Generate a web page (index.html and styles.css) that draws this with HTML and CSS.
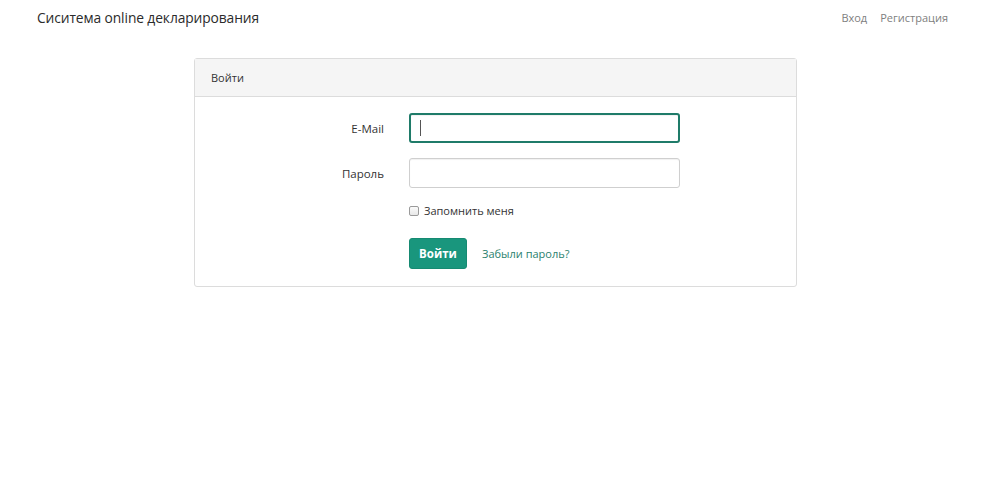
FILE: index.html
```html
<!DOCTYPE html>
<html lang="ru">
<head>
<meta charset="utf-8">
<title>Вход</title>
<link rel="stylesheet" href="styles.css">
</head>
<body>
<nav class="navbar">
  <a class="brand" href="#">Сиситема online декларирования</a>
  <div class="nav-links">
    <a href="#">Вход</a>
    <a href="#">Регистрация</a>
  </div>
</nav>
<main class="panel">
  <div class="panel-heading">Войти</div>
  <form class="panel-body">
    <div class="row">
      <label class="label">E-Mail</label>
      <div class="field"><input class="input focused" type="email"><span class="caret"></span></div>
    </div>
    <div class="row">
      <label class="label">Пароль</label>
      <div class="field"><input class="input" type="password"></div>
    </div>
    <div class="row check-row">
      <span class="label"></span>
      <label class="check"><span class="box"></span>Запомнить меня</label>
    </div>
    <div class="row btn-row">
      <span class="label"></span>
      <div class="actions">
        <button type="button" class="btn">Войти</button>
        <a class="forgot" href="#">Забыли пароль?</a>
      </div>
    </div>
  </form>
</main>
</body>
</html>
```
FILE: styles.css
```css
* { box-sizing: border-box; }
html, body { margin: 0; padding: 0; background: #fff; }
body {
  font-family: "Open Sans", "Noto Sans", "Liberation Sans", sans-serif;
  color: #333;
  font-size: 11.5px;
  width: 1000px;
  height: 487px;
}
.navbar {
  height: 34px;
  display: flex;
  align-items: center;
  justify-content: space-between;
  padding: 0 52px 0 37px;
}
.brand {
  font-size: 13.8px;
  color: #2b2b2b;
  text-decoration: none;
  letter-spacing: -0.1px;
}
.nav-links { display: flex; gap: 13px; }
.nav-links a {
  color: #808080;
  text-decoration: none;
  font-size: 11px;
}
.panel {
  margin: 24px 0 0 194px;
  width: 603px;
  border: 1px solid #dcdcdc;
  border-radius: 3px;
}
.panel-heading {
  height: 38px;
  background: #f5f5f5;
  border-bottom: 1px solid #dcdcdc;
  padding: 0 16px;
  display: flex;
  align-items: center;
  font-size: 11px;
  color: #333;
}
.panel-body {
  padding: 16px 0 17px;
  display: flex;
  flex-direction: column;
}
.row {
  display: flex;
  align-items: center;
  gap: 25px;
}
.row + .row { margin-top: 15px; }
.check-row { margin-top: 15px !important; }
.btn-row { margin-top: 20px !important; }
.label {
  width: 189px;
  text-align: right;
  font-size: 11.5px;
  color: #333;
}
.field { position: relative; }
.input {
  display: block;
  width: 271px;
  height: 30px;
  border: 1px solid #cfcfcf;
  border-radius: 3px;
  background: #fff;
  box-shadow: inset 0 1px 1px rgba(0,0,0,0.06);
  outline: none;
}
.input.focused {
  border: 2px solid #1f7b69;
}
.caret {
  position: absolute;
  left: 11px;
  top: 7px;
  width: 1px;
  height: 16px;
  background: #555;
}
.check {
  display: flex;
  align-items: center;
  gap: 5px;
  font-size: 11px;
  color: #333;
}
.box {
  width: 10px;
  height: 10px;
  border: 1px solid #9a9a9a;
  border-radius: 2px;
  background: linear-gradient(#fbfbfb, #e8e8e8);
}
.actions {
  display: flex;
  align-items: center;
  gap: 15px;
}
.btn {
  width: 58px;
  height: 31px;
  border: 1px solid #168a72;
  border-radius: 3px;
  background: #19967d;
  color: #fff;
  font-family: inherit;
  font-weight: 700;
  font-size: 11.5px;
  padding: 0;
}
.forgot {
  color: #2a7f6d;
  text-decoration: none;
  font-size: 11px;
}
```
